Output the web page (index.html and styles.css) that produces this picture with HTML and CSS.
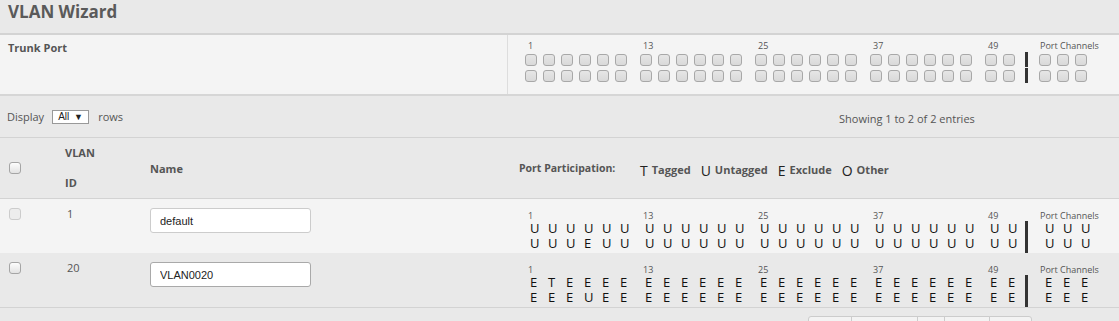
FILE: index.html
```html
<!DOCTYPE html>
<html lang="en">
<head>
<meta charset="UTF-8">
<meta name="viewport" content="width=device-width, initial-scale=1.0">
<title>VLAN Wizard</title>
<link rel="stylesheet" href="styles.css">
</head>
<body>

<h2 class="title">VLAN Wizard</h2>

<div class="trunk">
  <div class="trunk-label">Trunk Port</div>
  <div class="trunk-ports">
    <div class="ports" id="trunkPorts"></div>
  </div>
</div>

<div class="toolbar">
  <span>Display</span>
  <span class="select">All <span class="caret">&#9660;</span></span>
  <span>rows</span>
  <span class="info">Showing 1 to 2 of 2 entries</span>
</div>

<div class="row head">
  <div class="cell check"><input type="checkbox" class="cb"></div>
  <div class="cell vid">VLAN<br>ID</div>
  <div class="cell name">Name</div>
  <div class="cell part">
    <span class="part-title">Port Participation:</span>
    <span class="legend"><span class="key">T</span>Tagged</span>
    <span class="legend"><span class="key">U</span>Untagged</span>
    <span class="legend"><span class="key">E</span>Exclude</span>
    <span class="legend"><span class="key">O</span>Other</span>
  </div>
</div>

<div class="row light">
  <div class="cell check"><input type="checkbox" class="cb" disabled></div>
  <div class="cell vid">1</div>
  <div class="cell name"><input type="text" class="name-input" value="default"></div>
  <div class="cell ports-cell"><div class="ports" id="vlan1Ports"></div></div>
</div>

<div class="row dark last">
  <div class="cell check"><input type="checkbox" class="cb"></div>
  <div class="cell vid">20</div>
  <div class="cell name"><input type="text" class="name-input active" value="VLAN0020"></div>
  <div class="cell ports-cell"><div class="ports" id="vlan20Ports"></div></div>
</div>

<div class="pager">
  <span>First</span><span>Previous</span><span>1</span><span>Next</span><span>Last</span>
</div>

<script>
var groups = [[1, 6], [13, 6], [25, 6], [37, 6], [49, 2]];

function makeGroup(label, cols, cellFn) {
  var g = document.createElement("div");
  g.className = "group";
  var l = document.createElement("div");
  l.className = "plabel";
  l.textContent = label;
  g.appendChild(l);
  for (var r = 0; r < 2; r++) {
    var line = document.createElement("div");
    line.className = "pline";
    for (var c = 0; c < cols; c++) {
      line.appendChild(cellFn(r, c));
    }
    g.appendChild(line);
  }
  return g;
}

function buildPorts(id, portFn, channelFn) {
  var el = document.getElementById(id);
  groups.forEach(function(grp) {
    el.appendChild(makeGroup(grp[0], grp[1], function(r, c) {
      return portFn(grp[0] + c * 2 + r);
    }));
  });
  var bar = document.createElement("div");
  bar.className = "bar";
  el.appendChild(bar);
  var pc = makeGroup("Port Channels", 3, function(r, c) {
    return channelFn(r * 3 + c + 1);
  });
  pc.className = "group channels";
  el.appendChild(pc);
}

function box() {
  var s = document.createElement("span");
  s.className = "box";
  return s;
}

function letter(ch) {
  var s = document.createElement("span");
  s.className = "pl";
  s.textContent = ch;
  return s;
}

buildPorts("trunkPorts", box, box);

buildPorts("vlan1Ports", function(port) {
  return letter(port == 8 ? "E" : "U");
}, function() { return letter("U"); });

buildPorts("vlan20Ports", function(port) {
  if (port == 3) return letter("T");
  if (port == 8) return letter("U");
  return letter("E");
}, function() { return letter("E"); });
</script>
</body>
</html>
```

FILE: styles.css
```css
html {
  overflow: hidden;
}
body {
  margin: 0;
  padding: 0;
  font-family: "Open Sans", "Noto Sans", sans-serif;
  font-size: 11px;
  color: #555;
  background-color: #e9e9e9;
}
.title {
  margin: 0;
  height: 33px;
  padding: 0 8px;
  font-size: 17px;
  line-height: 23px;
  font-weight: bold;
  color: #5a5a5a;
  border-bottom: 2px solid #d3d3d3;
}
.trunk {
  display: flex;
  height: 59px;
  background-color: #f4f4f4;
  border-bottom: 2px solid #d6d6d6;
}
.trunk-label {
  width: 499px;
  padding: 5px 0 0 8px;
  font-weight: bold;
  line-height: 16px;
}
.trunk-ports {
  flex: 1;
  border-left: 1px solid #ddd;
  padding: 6px 0 0 17px;
}
.toolbar {
  display: flex;
  align-items: center;
  height: 41px;
  padding-left: 7px;
  border-bottom: 1px solid #d3d3d3;
}
.select {
  margin: 0 9px 0 8px;
  width: 37px;
  height: 14px;
  box-sizing: border-box;
  padding-left: 5px;
  border: 1px solid #999;
  background: #fff;
  font-family: "Liberation Sans", Arial, sans-serif;
  font-size: 10px;
  line-height: 12px;
  color: #222;
}
.caret {
  font-size: 9px;
  margin-left: 2px;
}
.info {
  margin-left: auto;
  width: 280px;
  padding-top: 4px;
}
.row {
  display: grid;
  grid-template-columns: 57px 85px 369px 1fr;
}
.cell {
  padding-left: 8px;
}
.cell.check {
  padding-left: 9px;
}
.head {
  height: 60px;
  align-items: center;
  border-bottom: 1px solid #d3d3d3;
  font-weight: bold;
}
.head .vid {
  line-height: 30px;
}
.part {
  display: flex;
  align-items: center;
}
.part-title {
  width: 121px;
  font-size: 10.5px;
}
.legend {
  margin-right: 10px;
}
.key {
  font-size: 14px;
  font-weight: normal;
  color: #222;
  margin-right: 4px;
  position: relative;
  top: 2px;
}
.light,
.dark {
  height: 54px;
  align-items: start;
}
.light {
  background-color: #f4f4f4;
}
.dark {
  background-color: #e9e9e9;
}
.last {
  border-bottom: 1px solid #d3d3d3;
}
.light .cell,
.dark .cell {
  padding-top: 9px;
}
.light .vid,
.dark .vid {
  padding-left: 10px;
  line-height: 12px;
}
.cb {
  -webkit-appearance: none;
  appearance: none;
  display: block;
  margin: 0;
  width: 12px;
  height: 12px;
  border: 1px solid #a5a5a5;
  border-radius: 3px;
  background: linear-gradient(#fdfdfd, #e2e2e2);
}
.cb:disabled {
  border-color: #ccc;
  background: #ededed;
}
.name-input {
  display: block;
  width: 161px;
  height: 25px;
  box-sizing: border-box;
  margin: 0;
  padding: 0 9px;
  border: 1px solid #ccc;
  border-radius: 3px;
  background: #fff;
  font-family: "Liberation Sans", Arial, sans-serif;
  font-size: 11px;
  color: #222;
}
.name-input.active {
  border-color: #a9a9a9;
}
.light .ports-cell,
.dark .ports-cell {
  padding: 12px 0 0 14px;
}
.ports {
  display: flex;
  align-items: flex-start;
}
.group {
  margin-right: 7px;
}
.plabel {
  height: 10px;
  padding-left: 3px;
  font-size: 9px;
  line-height: 10px;
  color: #555;
  white-space: nowrap;
}
.channels .plabel {
  padding-left: 1px;
}
.trunk .plabel {
  margin-bottom: 3px;
}
.pline {
  display: flex;
}
.box {
  width: 12px;
  height: 12px;
  margin: 0 6px 4px 0;
  box-sizing: border-box;
  border: 1px solid #a8a8a8;
  border-radius: 3px;
  background: linear-gradient(#e6e6e6, #d9d9d9);
}
.pl {
  width: 18px;
  box-sizing: border-box;
  padding-left: 5px;
  font-size: 13px;
  line-height: 15px;
  color: #111;
}
.channels .pl {
  padding-left: 6px;
}
.bar {
  width: 3px;
  height: 32px;
  margin: 10px 11px 0 -3px;
  background: #333;
}
.trunk .bar {
  height: 31px;
  margin-top: 11px;
  background: linear-gradient(#333 0, #333 15px, transparent 15px, transparent 16px, #333 16px);
}
.pager {
  display: flex;
  justify-content: flex-end;
  padding: 8px 87px 0 0;
}
.pager span {
  padding: 3px 10px;
  border: 1px solid #ccc;
  margin-left: -1px;
  background: #f3f3f3;
}
.pager span:first-child {
  border-radius: 3px 0 0 3px;
}
.pager span:last-child {
  border-radius: 0 3px 3px 0;
}
```
